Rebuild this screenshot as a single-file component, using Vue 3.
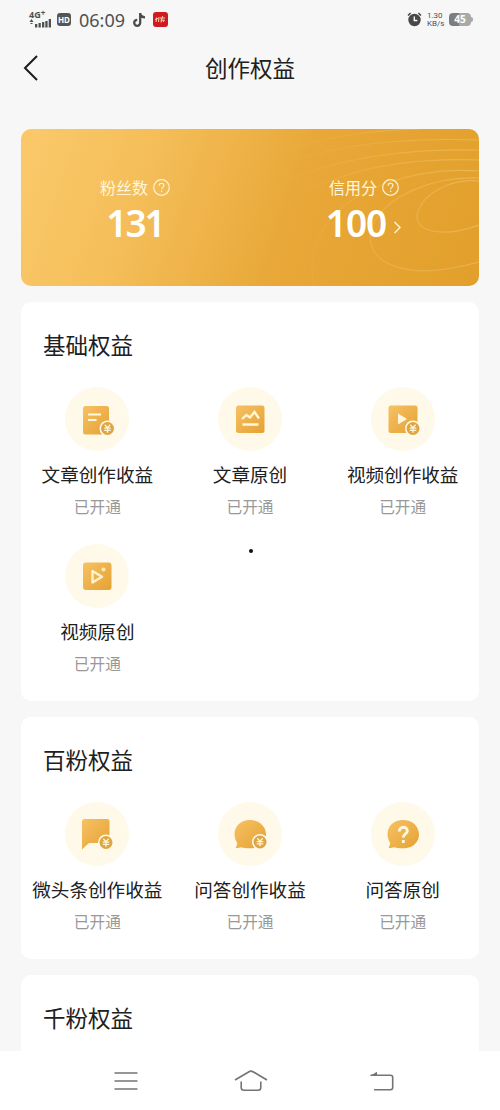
<script setup>
const sections = [
  {
    title: '基础权益',
    items: [
      { icon: 'article', label: '文章创作收益' },
      { icon: 'chart', label: '文章原创' },
      { icon: 'video', label: '视频创作收益' },
      { icon: 'play', label: '视频原创' },
    ],
  },
  {
    title: '百粉权益',
    items: [
      { icon: 'post', label: '微头条创作收益' },
      { icon: 'answer', label: '问答创作收益' },
      { icon: 'question', label: '问答原创' },
    ],
  },
  { title: '千粉权益', items: [] },
]
const coins = { article: [42.5, 41.5], video: [42, 41.5], post: [41, 40.5], answer: [42, 40] }
</script>

<template>
  <div class="screen">
    <svg class="defs" width="0" height="0" aria-hidden="true">
      <defs>
        <linearGradient id="gold" x1="0" y1="0" x2="1" y2="1">
          <stop offset="0" stop-color="#f7c164" />
          <stop offset="1" stop-color="#e5a233" />
        </linearGradient>
        <linearGradient id="wave" gradientUnits="userSpaceOnUse" x1="250" y1="0" x2="458" y2="0">
          <stop offset="0" stop-color="#ffdc96" stop-opacity="0" />
          <stop offset=".5" stop-color="#ffdc96" stop-opacity=".18" />
          <stop offset="1" stop-color="#ffdc96" stop-opacity=".34" />
        </linearGradient>
      </defs>
    </svg>

    <div class="status">
      <div class="signal">
        <span class="net">4G<sup>+</sup></span>
        <svg width="23" height="9" viewBox="0 0 23 9" fill="#505050">
          <path d="M.5 3 2.500 0l2 3zM1.500 4h2v1h-2zM6 5h2.300v3.500H6zM9.500 4h2.300v4.500H9.500zM13 3h2.300v5.500H13zM16.300 2h2.300v6.500h-2.300zM19.700 0H22v8.500h-2.300z" />
        </svg>
      </div>
      <span class="hd">HD</span>
      <span class="time">06:09</span>
      <svg class="note" width="13" height="16" viewBox="0 0 13 16" fill="none" stroke="#4c4c4c" stroke-width="2.300">
        <path d="M7.200 1v9.800a3 3 0 1 1-3-3M7.200 1.500c.4 2.400 2.200 3.700 4.800 3.800" />
      </svg>
      <svg class="app" width="15" height="15" viewBox="0 0 15 15">
        <rect width="15" height="15" rx="3" fill="#cf1a20" />
        <path d="M3.500 5.500 3 10M2 7.500l3-1M6 5l-.5 5M7 6h5M9.500 4 8 10.500M7.500 8.200h4L10 10" fill="none" stroke="#ffd0b0" stroke-width="1" />
      </svg>
      <span class="spacer"></span>
      <svg class="alarm" width="15" height="15" viewBox="0 0 15 15">
        <circle cx="7.500" cy="8" r="6.200" fill="#484848" />
        <path d="M1 3.500 3.600 1M14 3.500 11.400 1" stroke="#484848" stroke-width="1.600" />
        <path d="M7.300 4.500v4h3" fill="none" stroke="#fff" stroke-width="1.400" />
      </svg>
      <div class="rate"><span>1.30</span><span>KB/s</span></div>
      <div class="battery"><span>45</span></div>
    </div>

    <header class="header">
      <svg width="16" height="28" viewBox="0 0 16 28" fill="none" stroke="#1c1c1c" stroke-width="2">
        <path d="M14 2 2 14l12 12" />
      </svg>
      <h1>创作权益</h1>
    </header>

    <div class="summary">
      <svg class="waves" width="458" height="157" viewBox="0 0 458 157" fill="none" stroke="url(#wave)" stroke-width="1.200">
        <path d="M458 52c-29-3-55 13-61 30-7 20 22 28 61 14" />
        <path d="M458 49c-49-2-92 19-106 46-14 34 24 61 106 38" />
        <path d="M458 42c-68-5-127 20-151 51-16 22-19 43-14 64" />
        <path d="M458 31c-83-3-159 12-215 60" />
        <path d="M458 21c-85-2-165 10-229 50" />
        <path d="M458 11c-90-3-163 7-218 34" />
        <path d="M400 0c-52 1-101 9-145 25" />
      </svg>
      <div class="metric fans">
        <div class="caption">粉丝数
          <svg width="17" height="17" viewBox="0 0 17 17" fill="none" stroke="#fff2cf" stroke-width="1.200">
            <circle cx="8.500" cy="8.500" r="7.800" />
            <path d="M6.200 6.700c0-3.200 4.700-3.200 4.700-.2 0 1.800-2.300 1.900-2.300 3.800M8.600 11.600v1.300" />
          </svg>
        </div>
        <div class="value">131</div>
      </div>
      <div class="metric credit">
        <div class="caption">信用分
          <svg width="17" height="17" viewBox="0 0 17 17" fill="none" stroke="#fff2cf" stroke-width="1.200">
            <circle cx="8.500" cy="8.500" r="7.800" />
            <path d="M6.200 6.700c0-3.200 4.700-3.200 4.700-.2 0 1.800-2.300 1.900-2.300 3.800M8.600 11.600v1.300" />
          </svg>
        </div>
        <div class="value">100
          <svg class="more" width="9" height="13" viewBox="0 0 9 13" fill="none" stroke="#fff2cf" stroke-width="1.500">
            <path d="m1.500 1 5.500 5.500L1.500 12" />
          </svg>
        </div>
      </div>
    </div>

    <section v-for="s in sections" :key="s.title" class="panel">
      <h2>{{ s.title }}</h2>
      <div class="grid">
        <div v-for="i in s.items" :key="i.label" class="item">
          <svg class="icon" width="64" height="64" viewBox="0 0 64 64">
            <circle cx="32" cy="32" r="32" fill="#fff9e9" />
            <template v-if="i.icon === 'article'">
              <rect x="18" y="19" width="26" height="28.500" rx="2.500" fill="url(#gold)" />
              <path d="M23 27.500h13M23 33h8.500" stroke="#fff8df" stroke-width="2.200" />
            </template>
            <template v-else-if="i.icon === 'chart'">
              <rect x="18" y="18.500" width="28.500" height="27.500" rx="2.500" fill="url(#gold)" />
              <path d="m24 32 4.500-4 3.500 2.500 4.500-5.500 4.500 6.500M24.500 37.500h16" fill="none" stroke="#fff8df" stroke-width="2.300" />
            </template>
            <template v-else-if="i.icon === 'video'">
              <rect x="17.500" y="18.500" width="29" height="27.500" rx="2.500" fill="url(#gold)" />
              <path d="M27 26.500 36 32l-9 5.500z" fill="#fff8df" />
            </template>
            <template v-else-if="i.icon === 'play'">
              <rect x="18" y="18.500" width="28.500" height="27.500" rx="3" fill="url(#gold)" />
              <path d="M27.500 27v11.500l9.500-5.800z" fill="none" stroke="#fff3cd" stroke-width="2.400" stroke-linejoin="round" />
              <circle cx="38.500" cy="25.500" r="2" fill="#ffeab0" />
            </template>
            <path v-else-if="i.icon === 'post'" d="M19.500 17H42q2.500 0 2.500 2.500V41H24l-7 6.500V19.500Q17 17 19.500 17z" fill="url(#gold)" />
            <path v-else d="M32 18c-9 0-15.500 6-15.500 14 0 4 1.300 6.500 2.500 8.500.5 2-.8 3.500-1.300 5.500 1.800.4 3.800-.4 5.300-.7 3.500 1 7 1.200 11 1C42 45.800 48 40 48 32.500 48 24 41 18 32 18z" fill="url(#gold)" />
            <g v-if="i.icon === 'question'" fill="none" stroke="#fff8df" stroke-width="2.900">
              <path d="M28.300 29.500c0-5.500 8-5.500 8-.6 0 3.200-4 3-4 6.600" />
              <path d="M32.300 38v3" />
            </g>
            <g v-if="coins[i.icon]" :transform="`translate(${coins[i.icon][0]} ${coins[i.icon][1]})`">
              <circle r="8" fill="#fff9e9" />
              <circle r="6.500" fill="#dea542" />
              <path d="m-2.700-3.800 2.700 3 2.700-3M0-.8v5M-3.300-.4h6.600M-3.300 1.800h6.600" fill="none" stroke="#fff5d5" stroke-width="1.300" />
            </g>
          </svg>
          <div class="label">{{ i.label }}</div>
          <div class="state">已开通</div>
        </div>
      </div>
    </section>

    <span class="dot"></span>

    <nav class="nav">
      <svg width="24" height="20" viewBox="0 0 24 20" fill="none" stroke="#747474" stroke-width="1.600">
        <path d="M.5 2h23M.5 10h23M.5 18h23" />
      </svg>
      <svg class="home" width="34" height="22" viewBox="0 0 34 22" fill="none" stroke="#747474" stroke-width="1.600">
        <path d="M1 10 15 1.700q2-1.200 4 0L33 10M7.200 11.500v6q0 2.700 2.700 2.700h14.200q2.700 0 2.700-2.700v-6" />
      </svg>
      <svg class="back" width="24" height="20" viewBox="0 0 24 20" fill="none" stroke="#747474" stroke-width="1.600">
        <path d="M.5 4.300h20q2.200 0 2.200 2.200v10q0 2.200-2.200 2.200H4" />
        <path d="M0 5 7 .8V5z" fill="#747474" stroke="none" />
      </svg>
    </nav>
  </div>
</template>

<style>
body { background: #f7f7f7; }
</style>

<style scoped>
.screen {
  position: relative;
  display: flex;
  flex-direction: column;
  width: 500px;
  height: 1110px;
  overflow: hidden;
  background: #f7f7f7;
  font-family: "Noto Sans CJK SC", sans-serif;
  color: #202020;
}
.defs { position: absolute; }
.status {
  display: flex;
  align-items: center;
  flex: none;
  height: 39px;
  padding: 0 29px 0 29px;
  color: #505050;
}
.signal { display: flex; flex-direction: column; width: 23px; margin-top: -2px; }
.net { font: 700 9px/9px "Noto Sans", sans-serif; white-space: nowrap; }
.net sup { font-size: 8px; line-height: 0; vertical-align: 2px; }
.hd {
  width: 14px;
  height: 13px;
  margin-left: 5px;
  border-radius: 3px;
  background: #555;
  color: #fff;
  font: 700 8px/13px "Noto Sans", sans-serif;
  text-align: center;
}
.time { width: 47px; margin-left: 8px; font: 400 18px/20px "Noto Sans", sans-serif; white-space: nowrap; }
.note { margin-left: 7px; }
.app { margin-left: 7px; }
.spacer { flex: 1; }
.alarm { flex: none; }
.rate {
  display: flex;
  flex: none;
  flex-direction: column;
  width: 17px;
  margin-left: 5px;
  font: 400 8px/8px Roboto, sans-serif;
}
.battery {
  position: relative;
  width: 22px;
  height: 13px;
  margin-left: 5px;
  border-radius: 4px;
  background: linear-gradient(90deg, #7d7d7d 45%, #a9a9a9 45%);
  color: #fff;
  font: 700 10px/13px "Noto Sans", sans-serif;
  text-align: center;
}
.battery::after {
  content: "";
  position: absolute;
  right: -2px;
  top: 4px;
  width: 2px;
  height: 5px;
  border-radius: 0 2px 2px 0;
  background: #a9a9a9;
}
.header {
  display: grid;
  grid-template-columns: 60px 1fr 60px;
  align-items: center;
  flex: none;
  height: 58px;
}
.header svg { margin-left: 23px; }
h1, h2 { margin: 0; font-weight: 400; font-size: 22.5px; line-height: 30px; }
h1 { margin-bottom: 2px; text-align: center; }
.summary {
  position: relative;
  display: grid;
  grid-template-columns: 1fr 1fr;
  flex: none;
  height: 157px;
  margin: 32px 21px 0;
  border-radius: 10px;
  overflow: hidden;
  background: linear-gradient(109deg, #fac869 4%, #f4bd58 28%, #e8a737 60%, #e29f2b 100%);
  color: #fff;
}
.waves { position: absolute; inset: 0; }
.metric {
  position: relative;
  display: flex;
  flex-direction: column;
  align-items: center;
  padding-top: 47px;
}
.caption {
  display: flex;
  align-items: center;
  gap: 5px;
  height: 23px;
  margin-right: 1px;
  color: #fff6dc;
  font-size: 16px;
  line-height: 23px;
}
.value { position: relative; font: 600 37px/47px "Noto Sans", sans-serif; }
.fans .value { letter-spacing: -2px; margin-right: 1px; }
.credit .value { letter-spacing: -1px; margin-right: 17px; }
.more { position: absolute; left: 100%; top: 22px; margin-left: 7px; }
.panel {
  flex: none;
  margin: 16px 21px 0;
  padding: 27px 0;
  border-radius: 10px;
  background: #fff;
}
h2 { margin-left: 22px; }
.grid {
  display: grid;
  grid-template-columns: repeat(3, 1fr);
  row-gap: 27px;
  margin-top: 28px;
}
.item { display: flex; flex-direction: column; align-items: center; }
.icon { display: block; }
.label { margin-top: 11px; font-size: 18.600px; line-height: 24px; white-space: nowrap; }
.state { margin-top: 11px; color: #999; font-size: 15.700px; line-height: 20px; }
.dot {
  position: absolute;
  left: 249px;
  top: 549px;
  width: 4px;
  height: 4px;
  border-radius: 50%;
  background: #111;
}
.nav {
  position: absolute;
  left: 0;
  right: 0;
  bottom: 0;
  display: flex;
  align-items: center;
  height: 59px;
  padding-left: 113.5px;
  box-sizing: border-box;
  background: #fff;
}
.home { margin-left: 96px; }
.back { margin-left: 102px; }
</style>
